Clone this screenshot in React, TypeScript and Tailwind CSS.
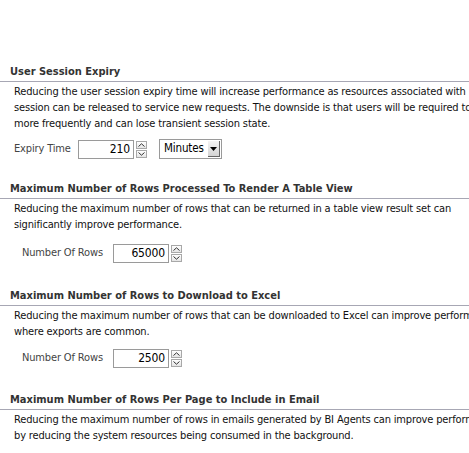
import React from "react";

const font = { fontFamily: '"DejaVu Sans Condensed", "DejaVu Sans", sans-serif' };

function Spinner() {
  return (
    <div className="flex flex-col gap-[1px] ml-[2px]">
      <div className="w-[11px] h-[8px] border border-[#a8a8a8] bg-gradient-to-b from-white to-[#e4e4e4] flex items-center justify-center">
        <svg width="7" height="4" viewBox="0 0 7 4">
          <path d="M0.5 3.5 L3.5 0.8 L6.5 3.5" fill="none" stroke="#333" strokeWidth="1" />
        </svg>
      </div>
      <div className="w-[11px] h-[8px] border border-[#a8a8a8] bg-gradient-to-b from-white to-[#e4e4e4] flex items-center justify-center">
        <svg width="7" height="4" viewBox="0 0 7 4">
          <path d="M0.5 0.5 L3.5 3.2 L6.5 0.5" fill="none" stroke="#333" strokeWidth="1" />
        </svg>
      </div>
    </div>
  );
}

function NumberField({ value }: { value: string }) {
  return (
    <div className="flex items-center">
      <div className="w-[56px] h-[19px] border border-[#9a9a9a] bg-white text-right pr-[3px] text-[12px] leading-[17px] text-black">
        {value}
      </div>
      <Spinner />
    </div>
  );
}

function Section({
  title,
  lines,
  className,
  children,
}: {
  title: string;
  lines: string[];
  className: string;
  children?: React.ReactNode;
}) {
  return (
    <div className={className}>
      <div className="pl-[10px] font-bold text-[11px] leading-[16px] text-[#333] pb-[1px] border-b border-[#a7a7b4] whitespace-nowrap">
        {title}
      </div>
      <div className="pl-[14px] pt-[2px] text-[11px] tracking-[-0.15px] leading-[16px] text-[#111] whitespace-nowrap">
        {lines.map((l) => (
          <div key={l}>{l}</div>
        ))}
      </div>
      {children}
    </div>
  );
}

export default function App() {
  return (
    <div className="w-[469px] h-[453px] bg-white overflow-hidden" style={font}>
      <Section
        className="pt-[64px]"
        title="User Session Expiry"
        lines={[
          "Reducing the user session expiry time will increase performance as resources associated with",
          "session can be released to service new requests. The downside is that users will be required to",
          "more frequently and can lose transient session state.",
        ]}
      >
        <div className="mt-[7px] h-[20px] flex items-center pl-[14px] text-[11px] tracking-[-0.15px] text-[#444]">
          <span className="w-[64px]">Expiry Time</span>
          <NumberField value="210" />
          <div className="ml-[12px] w-[63px] h-[20px] border border-[#9a9a9a] bg-white flex items-center justify-between pl-[4px] pr-[1px] text-[11.5px] tracking-[-0.15px] text-black">
            <span>Minutes</span>
            <div className="w-[12px] h-[16px] bg-gradient-to-b from-[#f4f4f4] to-[#d4d4d4] border-r border-b border-[#666] flex items-center justify-center">
              <svg width="7" height="4" viewBox="0 0 7 4">
                <path d="M0 0 L7 0 L3.5 4 Z" fill="#000" />
              </svg>
            </div>
          </div>
        </div>
      </Section>

      <Section
        className="pt-[22px]"
        title="Maximum Number of Rows Processed To Render A Table View"
        lines={[
          "Reducing the maximum number of rows that can be returned in a table view result set can",
          "significantly improve performance.",
        ]}
      >
        <div className="mt-[10px] h-[20px] flex items-center pl-[22px] text-[11px] tracking-[-0.15px] text-[#444]">
          <span className="w-[91px]">Number Of Rows</span>
          <NumberField value="65000" />
        </div>
      </Section>

      <Section
        className="pt-[25px]"
        title="Maximum Number of Rows to Download to Excel"
        lines={[
          "Reducing the maximum number of rows that can be downloaded to Excel can improve performance",
          "where exports are common.",
        ]}
      >
        <div className="mt-[8px] h-[20px] flex items-center pl-[22px] text-[11px] tracking-[-0.15px] text-[#444]">
          <span className="w-[91px]">Number Of Rows</span>
          <NumberField value="2500" />
        </div>
      </Section>

      <Section
        className="pt-[24px]"
        title="Maximum Number of Rows Per Page to Include in Email"
        lines={[
          "Reducing the maximum number of rows in emails generated by BI Agents can improve performance",
          "by reducing the system resources being consumed in the background.",
        ]}
      >
        <div className="mt-[10px] border-b border-[#8fb4d9]" />
      </Section>
    </div>
  );
}
